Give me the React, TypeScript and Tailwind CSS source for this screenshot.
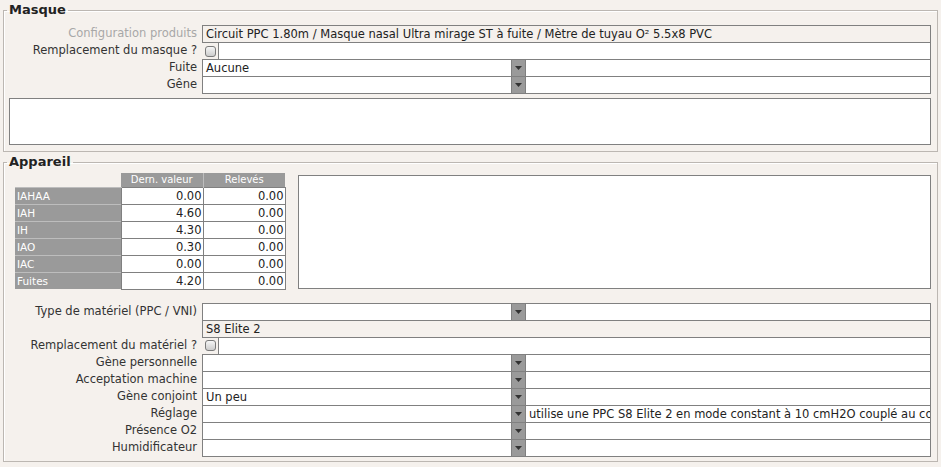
import React from 'react'

const FONT = { fontFamily: '"DejaVu Sans", Verdana, sans-serif' }

function Arrow() {
  return (
    <div className="w-[14px] shrink-0 bg-[#9a9a9a] border-l border-[#808080] flex items-center justify-center">
      <svg width="7" height="4" viewBox="0 0 7 4">
        <polygon points="0,0 7,0 3.5,4" fill="#333" />
      </svg>
    </div>
  )
}

function Label({ children, muted }: { children?: React.ReactNode; muted?: boolean }) {
  return (
    <div className={`w-[198px] shrink-0 pr-[5px] text-right leading-[17px] whitespace-nowrap ${muted ? 'text-[#a8a8a8]' : 'text-[#333]'}`}>
      {children}
    </div>
  )
}

function SelectRow({ label, value, extra }: { label: string; value?: string; extra?: string }) {
  return (
    <div className="flex h-[18px] -mb-px">
      <Label>{label}</Label>
      <div className="flex flex-1 min-w-0 border border-[#808080] bg-white h-[18px]">
        <div className="w-[308px] shrink-0 pl-[3px] leading-[16px] text-[#222]">{value}</div>
        <Arrow />
        <div className="flex-1 min-w-0 border-l border-[#808080] pl-[3px] leading-[16px] text-[#222] overflow-hidden whitespace-nowrap">{extra}</div>
      </div>
    </div>
  )
}

function CheckRow({ label }: { label: string }) {
  return (
    <div className="flex h-[18px] -mb-px">
      <Label>{label}</Label>
      <div className="flex flex-1 min-w-0 items-start h-[18px]">
        <div className="w-[16px] shrink-0 flex items-center justify-center h-[18px]">
          <div className="w-[11px] h-[11px] rounded-[3px] border border-[#7a7a7a] bg-gradient-to-b from-[#f6f6f6] to-[#cdcdcd]" />
        </div>
        <div className="flex-1 h-[18px] border border-[#808080] bg-white" />
      </div>
    </div>
  )
}

function TextRow({ label, value, muted }: { label?: string; value: string; muted?: boolean }) {
  return (
    <div className="flex h-[18px] -mb-px">
      <Label muted={muted}>{label}</Label>
      <div className="flex-1 min-w-0 h-[18px] border border-[#808080] bg-[#f5f1ed] pl-[3px] leading-[16px] text-[#222] whitespace-nowrap overflow-hidden">
        {value}
      </div>
    </div>
  )
}

const MEASURES = [
  ['IAHAA', '0.00', '0.00'],
  ['IAH', '4.60', '0.00'],
  ['IH', '4.30', '0.00'],
  ['IAO', '0.30', '0.00'],
  ['IAC', '0.00', '0.00'],
  ['Fuites', '4.20', '0.00'],
]

export default function App() {
  return (
    <div className="w-[941px] h-[467px] bg-[#f5f1ed] text-[11.5px] text-[#333] overflow-hidden pt-[2px]" style={FONT}>
      {/* Masque */}
      <fieldset className="min-w-0 mx-[3px] border border-[#bcb7b2] shadow-[inset_1px_1px_0_#fff] pl-[5px] pr-[6px] pt-[7px] pb-[6px]">
        <legend className="-ml-[2px] px-[2px] text-[13px] font-bold text-[#222] leading-[16px]">Masque</legend>
        <div className="-ml-[5px] flex flex-col">
          <TextRow label="Configuration produits" muted value="Circuit PPC 1.80m / Masque nasal Ultra mirage ST à fuite / Mètre de tuyau O² 5.5x8 PVC" />
          <CheckRow label="Remplacement du masque ?" />
          <SelectRow label="Fuite" value="Aucune" />
          <SelectRow label="Gêne" />
        </div>
        <div className="mt-[5px] h-[47px] border border-[#808080] bg-white" />
      </fieldset>

      {/* Appareil */}
      <fieldset className="min-w-0 mx-[3px] mt-[2px] border border-[#bcb7b2] shadow-[inset_1px_1px_0_#fff] pl-[5px] pr-[6px] pt-[3px] pb-[5px]">
        <legend className="-ml-[2px] px-[2px] text-[13px] font-bold text-[#222] leading-[16px]">Appareil</legend>
        <div className="flex gap-[12px] items-start">
          <table className="ml-[6px] border-collapse">
            <thead>
              <tr className="h-[14px]">
                <th className="w-[106px] p-0" />
                <th className="w-[82px] p-0 bg-[#9a9a9a] text-white font-normal text-[10px] leading-[13px] border-r border-[#bdbdbd]">Dern. valeur</th>
                <th className="w-[82px] p-0 bg-[#9a9a9a] text-white font-normal text-[10px] leading-[13px]">Relevés</th>
              </tr>
            </thead>
            <tbody>
              {MEASURES.map(([k, a, b]) => (
                <tr key={k} className="h-[17px]">
                  <td className="p-0 pl-[2px] bg-[#9a9a9a] text-white text-[10.5px] border-t border-[#bdbdbd] leading-[16px]">{k}</td>
                  <td className="p-0 pr-[1px] bg-white text-right border border-[#808080] leading-[16px] text-[#222]">{a}</td>
                  <td className="p-0 pr-[1px] bg-white text-right border border-[#808080] leading-[16px] text-[#222]">{b}</td>
                </tr>
              ))}
            </tbody>
          </table>
          <div className="flex-1 mt-[2px] h-[114px] border border-[#808080] bg-white" />
        </div>
        <div className="mt-[13px] -ml-[5px] flex flex-col">
          <SelectRow label="Type de matériel (PPC / VNI)" />
          <TextRow value="S8 Elite 2" />
          <CheckRow label="Remplacement du matériel ?" />
          <SelectRow label="Gène personnelle" />
          <SelectRow label="Acceptation machine" />
          <SelectRow label="Gène conjoint" value="Un peu" />
          <SelectRow label="Réglage" extra="utilise une PPC S8 Elite 2 en mode constant à 10 cmH2O couplé au confort expiratoire" />
          <SelectRow label="Présence O2" />
          <SelectRow label="Humidificateur" />
        </div>
      </fieldset>
    </div>
  )
}
